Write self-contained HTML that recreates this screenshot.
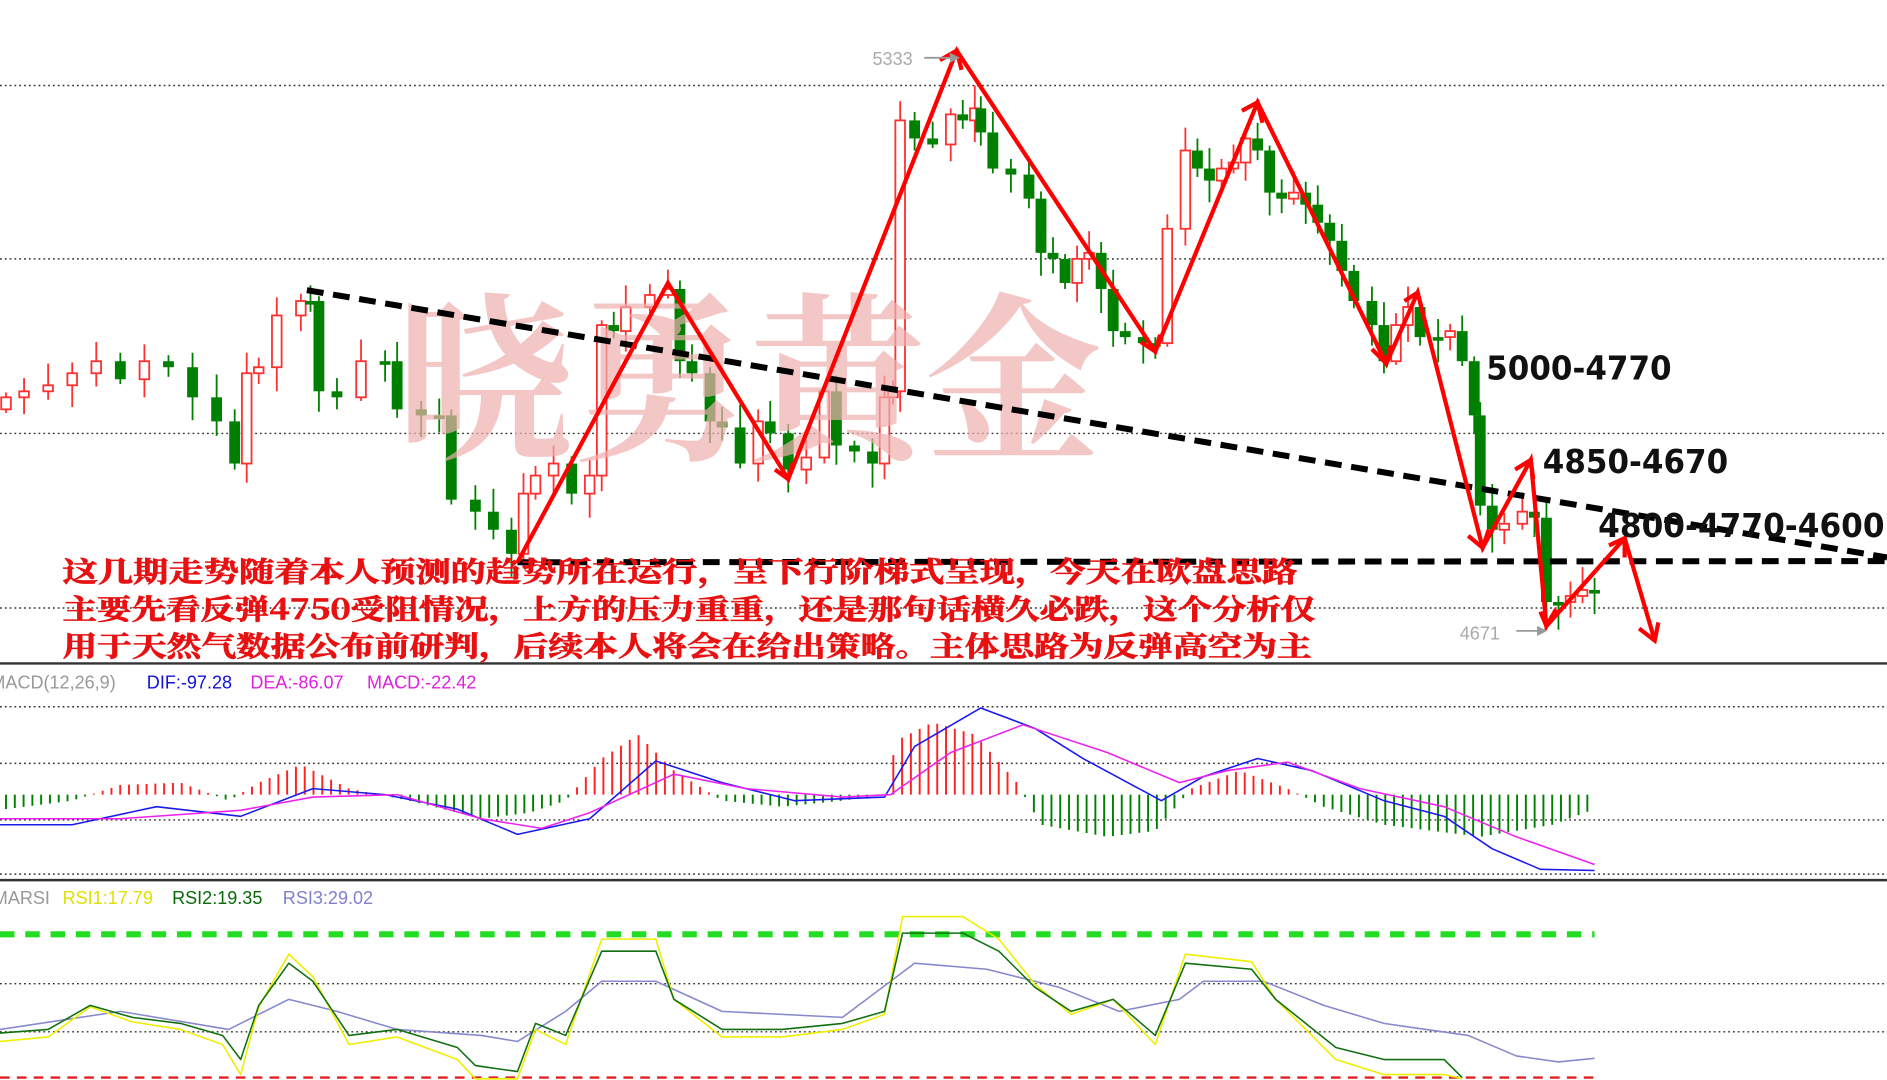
<!DOCTYPE html>
<html><head><meta charset="utf-8">
<style>
html,body{margin:0;padding:0;background:#fff;width:1887px;height:1080px;overflow:hidden}
svg{display:block}
</style></head>
<body>
<svg id="s" width="1887" height="1080" viewBox="0 0 1568 897" preserveAspectRatio="none" xmlns="http://www.w3.org/2000/svg">
<rect width="1568" height="897" fill="#fff"/>
<g stroke="#333" stroke-width="1.2" stroke-dasharray="1.5,2.5">
<line x1="0" y1="71" x2="1568" y2="71"/>
<line x1="0" y1="215" x2="1568" y2="215"/>
<line x1="0" y1="360" x2="1568" y2="360"/>
<line x1="0" y1="505" x2="1568" y2="505"/>
<line x1="0" y1="587" x2="1568" y2="587"/>
<line x1="0" y1="634" x2="1568" y2="634"/>
<line x1="0" y1="681" x2="1568" y2="681"/>
<line x1="0" y1="726" x2="1568" y2="726"/>
<line x1="0" y1="817" x2="1568" y2="817"/>
<line x1="0" y1="857" x2="1568" y2="857"/>
</g>
<line x1="0" y1="551" x2="1568" y2="551" stroke="#333" stroke-width="2"/>
<line x1="0" y1="731" x2="1568" y2="731" stroke="#333" stroke-width="2"/>
<line x1="0" y1="776" x2="1325" y2="776" stroke="#22dd22" stroke-width="5" stroke-dasharray="12,9"/>
<line x1="0" y1="895" x2="1325" y2="895" stroke="#e02020" stroke-width="2" stroke-dasharray="8,6"/>
<g id="candles"></g>
<g id="macd"></g>
<g id="rsi"></g>
<text x="330" y="370" font-family="'Noto Serif CJK SC','Noto Sans CJK SC',serif" font-size="150" font-weight="bold" fill="#f0b0b0" opacity="0.7" textLength="585" lengthAdjust="spacingAndGlyphs">晓勇黄金</text>
<g stroke="#000" stroke-width="5" stroke-dasharray="14,8" fill="none">
<line x1="255" y1="241" x2="1568" y2="463"/>
<line x1="430" y1="467" x2="1568" y2="466"/>
</g>
<g stroke="#ff0000" stroke-width="3.5" fill="none" stroke-linejoin="miter">
<polyline points="430,467 555,235 655,398 795,42 960,292 1045,85 1152,302 1178,243 1232,455 1272,382 1285,520 1350,447 1375,532"/>
<polyline points="781,50 795,42 799,58"/>
<polyline points="1032,92 1045,85 1049,102"/>
<polyline points="1167,250 1178,243 1182,259"/>
<polyline points="1259,390 1272,382 1274,398"/>
<polyline points="1337,453 1350,447 1350,463"/>
<polyline points="1362,522 1375,532 1378,517"/>
<polyline points="1220,445 1232,455 1237,440"/>
<polyline points="1280,508 1285,520 1293,506"/>
<polyline points="1140,290 1152,302 1156,287"/>
<polyline points="644,390 655,398 659,384"/>
<polyline points="948,284 960,292 964,278"/>
</g>
<g font-family="'DejaVu Sans','Liberation Sans',sans-serif" font-weight="bold" font-size="27" fill="#111">
<text x="1235" y="315" textLength="154" lengthAdjust="spacingAndGlyphs">5000-4770</text>
<text x="1282" y="393" textLength="154" lengthAdjust="spacingAndGlyphs">4850-4670</text>
<text x="1328" y="446" textLength="238" lengthAdjust="spacingAndGlyphs">4800-4770-4600</text>
</g>
<g font-family="'Liberation Sans',sans-serif" font-size="15" fill="#aaa">
<text x="725" y="54">5333</text>
<text x="1213" y="531">4671</text>
</g>
<g stroke="#999" stroke-width="1.5" fill="#999">
<line x1="768" y1="48" x2="790" y2="48"/><path d="M790,45 L796,48 L790,51Z"/>
<line x1="1260" y1="524" x2="1278" y2="524"/><path d="M1278,521 L1284,524 L1278,527Z"/>
</g>
<g font-family="'Noto Serif CJK SC','Noto Sans CJK SC',serif" font-size="23" font-weight="bold" fill="#e81010" stroke="#e81010" stroke-width="0.6">
<text x="52" y="483" textLength="1026" lengthAdjust="spacingAndGlyphs">这几期走势随着本人预测的趋势所在运行，呈下行阶梯式呈现，今天在欧盘思路</text>
<text x="52" y="514" textLength="1041" lengthAdjust="spacingAndGlyphs">主要先看反弹4750受阻情况，上方的压力重重，还是那句话横久必跌，这个分析仅</text>
<text x="52" y="545" textLength="1038" lengthAdjust="spacingAndGlyphs">用于天然气数据公布前研判，后续本人将会在给出策略。主体思路为反弹高空为主</text>
</g>
<g font-family="'Liberation Sans',sans-serif" font-size="15">
<text x="-8" y="572" fill="#999">MACD(12,26,9)</text>
<text x="122" y="572" fill="#1010e0">DIF:-97.28</text>
<text x="208" y="572" fill="#e020e0">DEA:-86.07</text>
<text x="305" y="572" fill="#e020e0">MACD:-22.42</text>
<text x="-6" y="751" fill="#999">MARSI</text>
<text x="52" y="751" fill="#e0e000">RSI1:17.79</text>
<text x="143" y="751" fill="#0a6a0a">RSI2:19.35</text>
<text x="235" y="751" fill="#8080d0">RSI3:29.02</text>
</g>
</svg>
<script>
(function(){
var NS="http://www.w3.org/2000/svg";
function el(p,t,a){var e=document.createElementNS(NS,t);for(var k in a)e.setAttribute(k,a[k]);p.appendChild(e);return e;}
var c=[[5,330],[20,325],[40,320],[60,310],[80,300],[100,315],[120,300],[140,305],[160,330],[180,350],[195,385],[205,310],[215,305],[230,262],[250,250],[258,250],[265,325],[280,330],[300,300],[320,300],[330,340],[350,345],[365,345],[375,415],[395,425],[410,440],[425,460],[435,410],[445,395],[460,385],[475,410],[490,395],[500,270],[510,275],[520,255],[540,245],[555,240],[565,300],[575,310],[590,350],[600,355],[615,385],[630,350],[640,360],[655,390],[670,380],[685,325],[695,370],[710,375],[725,385],[735,330],[742,325],[748,100],[760,115],[775,120],[790,95],[800,100],[810,90],[815,110],[825,140],[840,145],[855,165],[865,210],[875,215],[885,235],[895,215],[905,210],[915,240],[925,275],[935,280],[950,285],[960,285],[970,190],[985,125],[995,140],[1005,150],[1015,140],[1025,135],[1035,115],[1045,125],[1055,160],[1065,165],[1075,160],[1085,170],[1095,185],[1105,200],[1115,225],[1125,250],[1140,270],[1150,300],[1160,270],[1170,255],[1180,280],[1195,280],[1205,275],[1215,300],[1225,345],[1230,420],[1240,440],[1250,435],[1265,425],[1275,430],[1285,500],[1295,500],[1305,495],[1315,490],[1325,490]];
var g=document.getElementById("candles");
for(var i=0;i<c.length;i++){var x=c[i][0],cl=c[i][1],op=i?c[i-1][1]:cl+10;
 var up=cl<op, col=up?"#ff3030":"#008000";
 var bt=Math.min(op,cl),bb=Math.max(op,cl);if(bb-bt<3){bb=bt+3;}
 var wt=bt-(4+(i*7)%16),wb=bb+(3+(i*11)%18);
 el(g,"line",{x1:x,y1:wt,x2:x,y2:wb,stroke:col,"stroke-width":1.5});
 if(up)el(g,"rect",{x:x-4,y:bt,width:8,height:bb-bt,fill:"#fff",stroke:col,"stroke-width":1.5});
 else el(g,"rect",{x:x-4.5,y:bt,width:9,height:bb-bt,fill:col});
}
function interp(k,x){for(var i=0;i<k.length-1;i++){if(x>=k[i][0]&&x<=k[i+1][0]){var t=(x-k[i][0])/(k[i+1][0]-k[i][0]);return k[i][1]+t*(k[i+1][1]-k[i][1]);}}return k[k.length-1][1];}
function poly(p,k,col,w){el(p,"polyline",{points:k.map(function(a){return a.join(",")}).join(" "),fill:"none",stroke:col,"stroke-width":w||1.3,"stroke-linejoin":"round"});}
var m=document.getElementById("macd");
var bars=[[5,-12],[60,-5],[100,8],[150,10],[190,-5],[215,10],[250,25],[290,5],[340,-5],[400,-20],[440,-15],[470,-5],[500,30],[530,50],[560,20],[600,-5],[650,-10],[700,-5],[735,0],[745,45],[775,60],[810,50],[845,10],[865,-25],[920,-35],[960,-30],[990,5],[1030,20],[1070,5],[1100,-10],[1150,-25],[1230,-35],[1290,-25],[1325,-12]];
for(var x=5;x<=1325;x+=7.3){var h=interp(bars,x);el(m,"line",{x1:x,y1:660,x2:x,y2:660-h,stroke:h>=0?"#ff2020":"#008000","stroke-width":1.6});}
poly(m,[[0,685],[60,685],[130,670],[200,678],[260,655],[320,660],[380,672],[430,693],[490,680],[545,632],[600,650],[660,665],[735,662],[760,620],[815,588],[860,605],[900,630],[965,665],[1000,645],[1045,630],[1090,640],[1150,665],[1200,678],[1240,705],[1280,722],[1325,723]],"#1a1aee");
poly(m,[[0,680],[100,680],[200,673],[260,662],[330,660],[400,680],[450,688],[490,675],[560,643],[620,655],[700,662],[740,660],[790,625],[850,602],[920,625],[980,650],[1020,640],[1070,633],[1130,655],[1200,670],[1260,695],[1325,718]],"#ee22ee");
var r=document.getElementById("rsi");
var g2=[[0,858],[40,855],[75,835],[110,845],[150,850],[185,860],[200,880],[215,835],[240,800],[260,815],[290,860],[330,855],[380,870],[395,885],[430,890],[445,850],[470,860],[500,790],[545,790],[560,830],[600,855],[650,855],[700,850],[735,840],[750,775],[800,775],[830,790],[860,820],[890,840],[925,830],[960,860],[985,800],[1040,805],[1060,830],[1110,870],[1150,880],[1200,880],[1215,895]];
poly(r,[[0,855],[100,840],[190,855],[240,830],[280,840],[330,855],[400,860],[430,865],[470,840],[500,815],[545,815],[600,840],[700,845],[760,800],[820,805],[880,820],[930,840],[980,830],[1000,815],[1050,815],[1100,835],[1150,850],[1220,860],[1260,877],[1295,882],[1325,879]],"#8888cc");
poly(r,g2.map(function(a){return [a[0],Math.min(896,830+(a[1]-830)*1.25)]}),"#eeee00");
poly(r,g2,"#107010");
})();
</script>
</body></html>
